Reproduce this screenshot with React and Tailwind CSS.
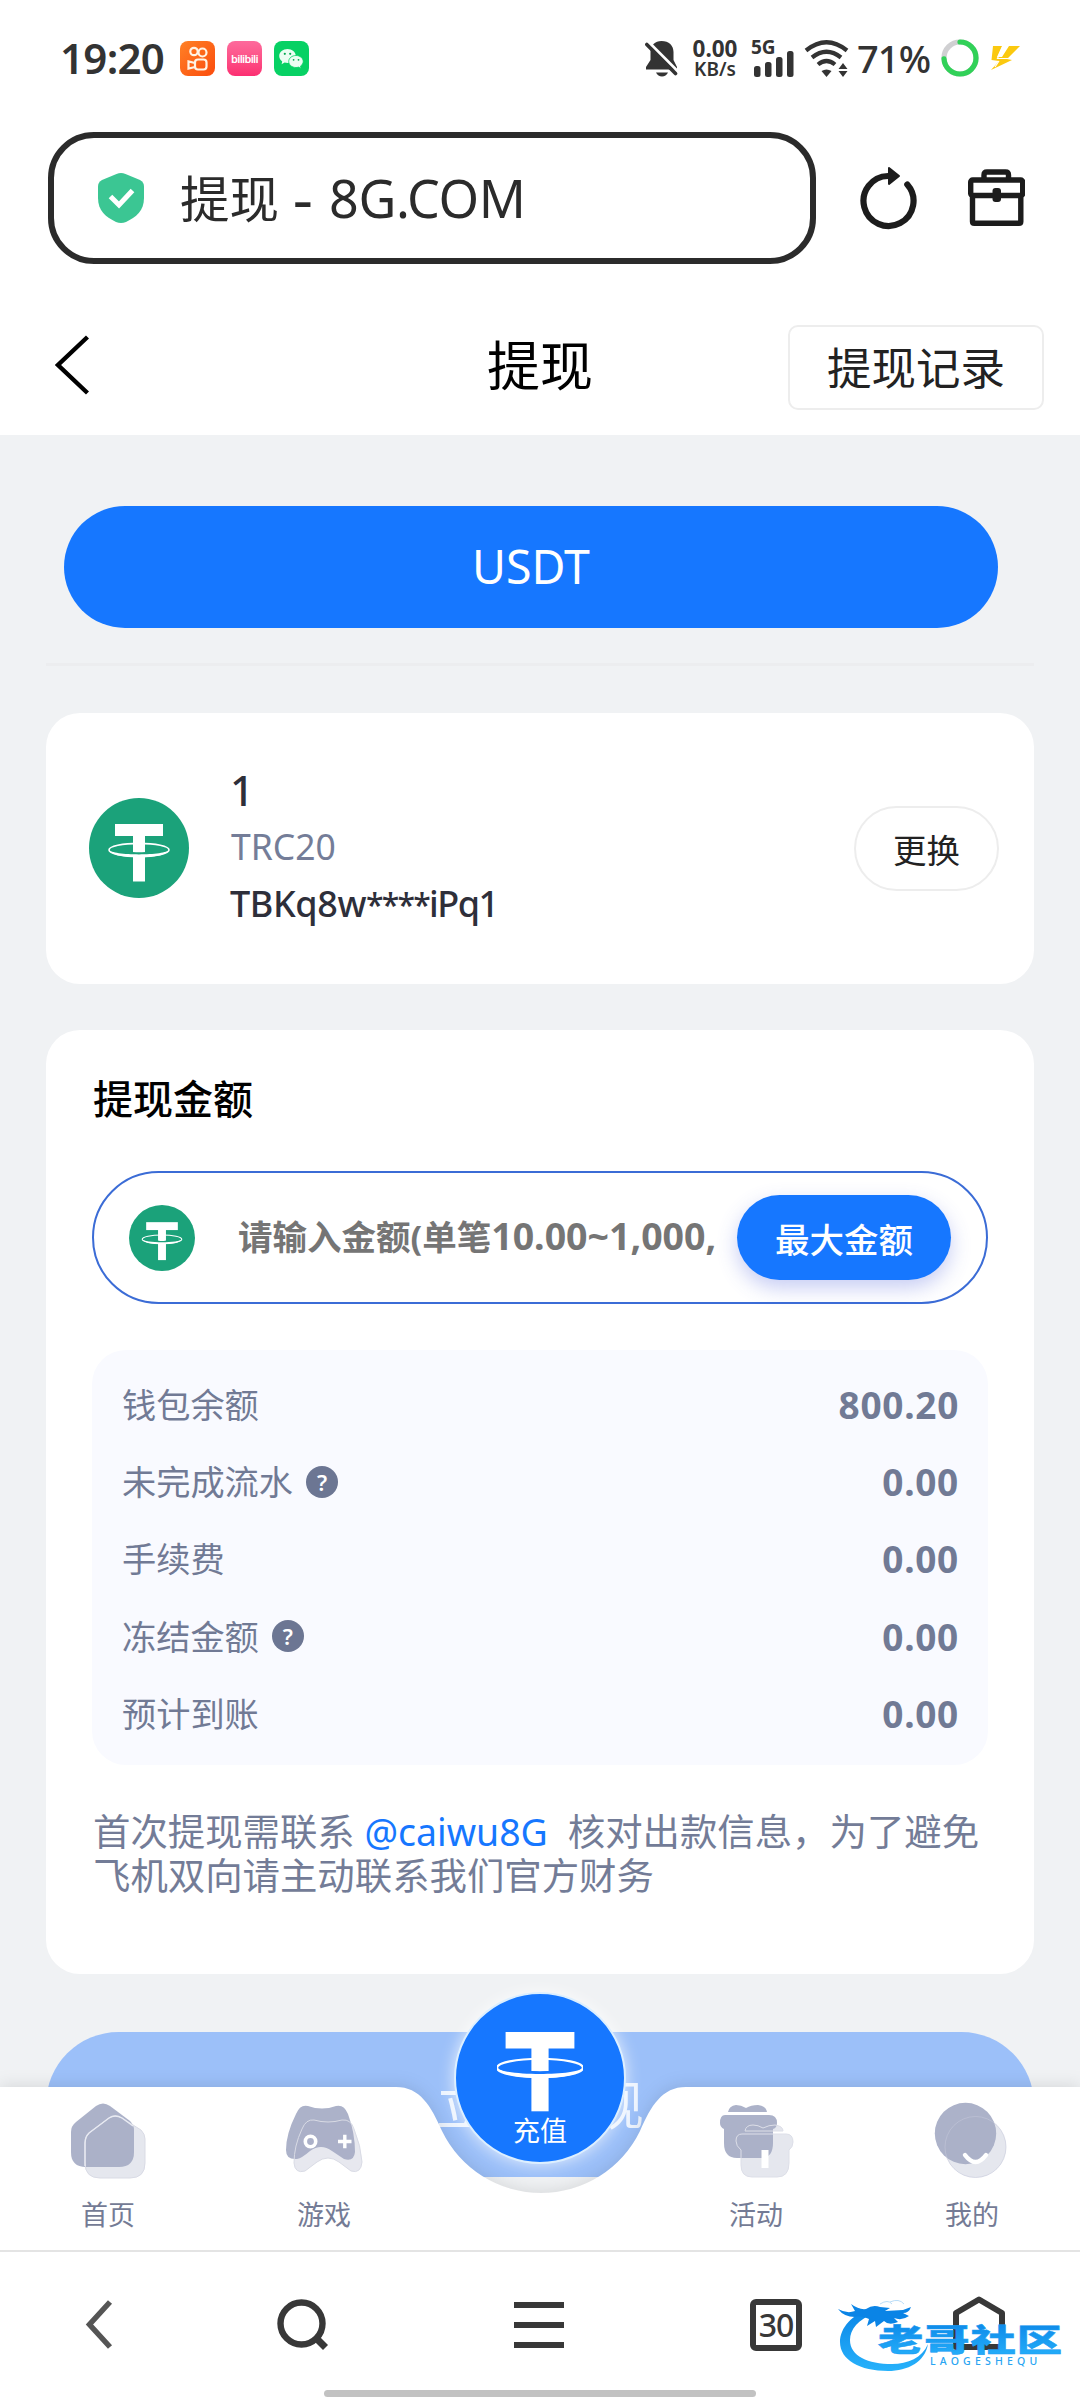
import React from "react";

const saldos = [
  { label: "钱包余额", valor: "800.20" },
  { label: "未完成流水", valor: "0.00", ayuda: true },
  { label: "手续费", valor: "0.00" },
  { label: "冻结金额", valor: "0.00", ayuda: true },
  { label: "预计到账", valor: "0.00" },
];

function TetherMark({ fondo }) {
  return (
    <>
      <path d="M26 26h48v12H26z" fill="#fff" />
      <ellipse cx="50" cy="52" rx="30" ry="6.6" fill="none" stroke="#fff" strokeWidth="1.6" />
      <path d="M20 51.5C21 62 79 62 80 51.5C78 58 22 58 20 51.5z" fill="#fff" />
      <path d="M44 37h12v17.3q-6 .6 -12 0z" fill="#fff" />
      <path d="M44 54.3q6 .6 12 0v1.3q-6 .6 -12 0z" fill={fondo} />
      <path d="M44 58h12v25.500H44z" fill="#fff" />
    </>
  );
}

function TetherIcon({ className }) {
  return (
    <svg viewBox="0 0 100 100" className={className}>
      <circle cx="50" cy="50" r="50" fill="#1ba27a" />
      <TetherMark fondo="#1ba27a" />
    </svg>
  );
}

function StatusBar() {
  return (
    <div className="flex h-[116px] shrink-0 items-center pl-[60px] text-[#333]">
      <span className="w-[120px] text-[42px] leading-none font-semibold tracking-[-0.700px]">19:20</span>
      <div className="flex gap-[12px]">
        <svg viewBox="0 0 35 35" className="size-[35px]">
          <defs>
            <linearGradient id="naranja" x1="0" y1="0" x2="1" y2="1">
              <stop offset="0" stopColor="#ff8126" />
              <stop offset="1" stopColor="#fb4c0d" />
            </linearGradient>
          </defs>
          <rect width="35" height="35" rx="8" fill="url(#naranja)" />
          <g fill="none" stroke="#fff3e4" strokeWidth="2.2">
            <circle cx="14" cy="10.500" r="3.700" />
            <circle cx="22.500" cy="11.500" r="4" />
            <rect x="15" y="18.500" width="11.500" height="10" rx="3" />
            <path d="M15 22l-6.500 -1.500v7l6.500 -1.500" />
          </g>
        </svg>
        <div className="flex size-[35px] items-center justify-center rounded-[8px] bg-linear-to-b from-[#fd6a9c] to-[#fc2e72]">
          <span className="text-[11px] leading-none font-semibold tracking-[-0.700px] text-white">bilibili</span>
        </div>
        <svg viewBox="0 0 35 35" className="size-[35px]">
          <rect width="35" height="35" rx="8" fill="#07d164" />
          <path d="M13.500 8C9 8 5.200 11 5.200 15c0 2.200 1.200 4 3 5.400l-.6 2.800 3-1.600c1 .3 2 .4 3 .4 4.600 0 8.200-3 8.200-7S18 8 13.500 8z" fill="#ecfdf3" />
          <path d="M22 14.500c-4 0-7.300 2.600-7.300 6s3.200 6 7.300 6c.8 0 1.700-.1 2.500-.4l2.600 1.400-.6-2.400c1.700-1.100 2.700-2.800 2.700-4.600 0-3.400-3.200-6-7.200-6z" fill="#ecfdf3" stroke="#07d164" strokeWidth=".8" />
          <g fill="#07a853">
            <circle cx="10.800" cy="12.800" r="1.100" />
            <circle cx="16.200" cy="12.800" r="1.100" />
            <circle cx="19.600" cy="18.800" r=".9" />
            <circle cx="24.500" cy="18.800" r=".9" />
          </g>
        </svg>
      </div>

      <div className="ml-[336px] flex items-center">
        <svg viewBox="0 0 33 37" className="h-[37px] w-[33px]">
          <path d="M16.500 1C10 1 5.500 5.500 5.500 12v8L1 27v2.500h31V27l-3.500-7v-8C28.500 5.500 24 1 16.500 1z" fill="#333" />
          <path d="M11 32.500h12q-2 4 -6 4t-6 -4z" fill="#333" />
          <path d="M2.500 1L34 32.500" stroke="#fff" strokeWidth="3" />
          <path d="M1.800 4.500L30.500 33.500" stroke="#333" strokeWidth="3.600" strokeLinecap="round" />
        </svg>
        <div className="ml-[12px] w-[50px] text-center font-bold">
          <div className="text-[22.500px] leading-[21px]">0.00</div>
          <div className="text-[19px] leading-[20px] font-semibold">KB/s</div>
        </div>
        <svg viewBox="0 0 44 37" className="ml-[11px] h-[37px] w-[44px] overflow-visible">
          <text x="0" y="14" fontSize="19" fontWeight="700" fill="#333">5G</text>
          <g fill="#333">
            <rect x="3" y="26" width="6.500" height="11" rx="2.500" />
            <rect x="14" y="22" width="6.500" height="15" rx="2.500" />
            <rect x="25" y="17" width="6.500" height="20" rx="2.500" />
            <rect x="36" y="11" width="6.500" height="26" rx="2.500" />
          </g>
        </svg>
        <svg viewBox="0 0 46 37" className="ml-[9px] h-[37px] w-[46px]">
          <g fill="none" stroke="#333" strokeWidth="4.200">
            <path d="M2 10.500Q22.500 -6 43 10.500" />
            <path d="M8 17.500Q22.500 6 37 17.500" />
            <path d="M14 24.500Q22.500 17.500 31 24.500" />
          </g>
          <path d="M17.500 31q5 -3 10 0l-5 6z" fill="#333" />
          <path d="M39 23l4.500 6h-9zM39 37l4.500 -6h-9z" fill="#333" />
        </svg>
        <span className="ml-[7px] w-[84px] text-[38px] leading-none font-medium tracking-[-0.900px]">71%</span>
        <svg viewBox="0 0 38 38" className="size-[38px]">
          <circle cx="19" cy="19" r="16" fill="none" stroke="#d0d0d2" strokeWidth="5.200" />
          <circle
            cx="19"
            cy="19"
            r="16"
            fill="none"
            stroke="#31d158"
            strokeWidth="5.200"
            strokeLinecap="round"
            pathLength="100"
            strokeDasharray="74 100"
            transform="rotate(-90 19 19)"
          />
        </svg>
        <svg viewBox="0 0 30 26" className="ml-[11px] h-[26px] w-[30px]">
          <path d="M3 1h9L7 12l5 0L19 1h11L17 14l5 1L1 25l8 -9l-7.500 -1z" fill="#fbc90f" />
          <path d="M13 1L7.500 13.500L18 13.500M9 16L5 22" stroke="#fff" strokeWidth="1.200" fill="none" />
        </svg>
      </div>
    </div>
  );
}

function AddressBar() {
  return (
    <div className="mt-[16px] flex h-[132px] shrink-0 items-center pl-[48px]">
      <div className="flex h-[132px] w-[768px] items-center rounded-[46px] border-[6px] border-[#2b2b2b] pl-[44px]">
        <svg viewBox="0 0 46 50" className="h-[50px] w-[46px]">
          <path d="M18.500 1Q23 -.8 27.500 1L42 7q4 2 4 6.500V25c0 13-8 19-18 24q-5 2 -10 0C8 44 0 38 0 25V13.500Q0 9 4 7z" fill="#3bc693" />
          <path d="M12.500 23.500l8.500 8.500L34.500 17.500" fill="none" stroke="#fff" strokeWidth="5" />
        </svg>
        <div className="ml-[36px] flex items-baseline text-[49.500px] leading-[60px] text-[#2b2b2b]">
          <span>提现</span>
          <span className="ml-[14px] w-[20px] origin-left scale-x-120 text-[51px] font-medium">-</span>
          <span className="ml-[16px] text-[52px] tracking-[-0.300px]">8G.COM</span>
        </div>
      </div>
      <svg viewBox="0 0 60 66" className="-mt-[3px] ml-[42px] h-[66px] w-[60px]">
        <path d="M49.300 20.500A25 25 0 1 1 30 12" fill="none" stroke="#1c1c1c" strokeWidth="6.200" strokeLinecap="round" />
        <path d="M31 4l10 8l-10 8z" fill="#1c1c1c" stroke="#1c1c1c" strokeWidth="2" strokeLinejoin="round" />
      </svg>
      <svg viewBox="0 0 58 58" className="-mt-[3px] ml-[49px] size-[58px]">
        <g fill="none" stroke="#1c1c1c" strokeWidth="5.400">
          <rect x="3.700" y="12" width="52" height="15.500" rx="2" />
          <path d="M5.500 27v26.500q0 1.800 1.800 1.800h44.700q1.800 0 1.800 -1.800V27" />
          <path d="M17 11V7q0 -3 3 -3h18.500q3 0 3 3v4" />
        </g>
        <rect x="25.500" y="20" width="8.500" height="14" rx="3" fill="#1c1c1c" />
      </svg>
    </div>
  );
}

function Header() {
  return (
    <div className="mt-[61px] grid h-[110px] shrink-0 grid-cols-[290px_500px_1fr] items-start">
      <svg viewBox="0 0 34 60" className="mt-[10px] ml-[55px] h-[60px] w-[34px]">
        <path d="M32.500 2L3 30l29.500 28" fill="none" stroke="#000" strokeWidth="4.400" />
      </svg>
      <h1 className="mt-[11px] text-center text-[53px] leading-[60px] text-black">提现</h1>
      <button className="-ml-[2px] h-[85px] w-[256px] rounded-[10px] border-2 border-[#ededed] text-[44.500px] leading-[60px] text-[#222]">
        提现记录
      </button>
    </div>
  );
}

function CuentaCard() {
  return (
    <div className="mt-[47px] flex h-[271px] items-center rounded-[34px] bg-white pr-[35px] pb-[1px] pl-[43px]">
      <TetherIcon className="size-[100px]" />
      <div className="ml-[42px] flex-1 pb-[3px] text-[36px] leading-[57px] text-[#2e2f3a]">
        <div className="-ml-[1px] text-[42px] font-medium">1</div>
        <div className="text-[35.500px] text-[#747d98]">TRC20</div>
        <div className="-ml-[1px] font-medium tracking-[-0.400px]">
          TBKq8w<span className="text-[32px] tracking-[-1.800px]">****</span>
          <span className="tracking-[-1.500px]">iPq1</span>
        </div>
      </div>
      <button className="h-[85px] w-[145px] rounded-full border-2 border-[#ededed] pt-[5px] text-[33.500px] text-[#222]">
        更换
      </button>
    </div>
  );
}

function Tab({ label, children }) {
  return (
    <div className="flex flex-col items-center pt-[13px]">
      <svg viewBox="0 0 80 80" className="size-[80px]">{children}</svg>
      <span className="mt-[17px] text-[27px] leading-[36px] text-[#747b95]">{label}</span>
    </div>
  );
}

function TabBar() {
  return (
    <div className="absolute bottom-0 left-0 h-[163px] w-full">
      {/* Barra con la muesca para el botón central */}
      <svg
        viewBox="0 0 1080 163"
        className="absolute inset-0 h-[163px] w-full overflow-visible drop-shadow-[0_-2px_8px_rgba(0,0,0,0.1)]"
      >
        <path d="M0 0H396C420 0 431 19 442 44A110 110 0 0 0 640 44C651 19 662 0 686 0H1080V163H0z" fill="#fff" />
      </svg>
      <div className="relative grid h-full grid-cols-5">
        <Tab label="首页">
          <path d="M28 6q7 -5 14 0l20 15q4 4 4 9v22q0 15 -15 15H18Q3 67 3 52V32q0 -6 5 -10z" fill="#acb2c9" />
          <path d="M41 18q6 -4 13 0l19 12q4 4 4 9v24q0 15 -15 15H32Q17 78 17 63V43q0 -6 4 -10z" fill="#a9aec6" fillOpacity=".3" stroke="#d9dbe5" strokeWidth="1" />
          <path d="M17 66V43q0 -6 4 -10L41 18q6 -4 13 0l11 8" fill="none" stroke="#e8eaf2" strokeWidth="1.400" />
        </Tab>
        <Tab label="游戏">
          <path d="M12 14q4 -10 12 -8q14 5 28 0q8 -2 12 8q7 19 7 38q-1 10 -11 7l-12 -8q-11 -8 -22 0q-8 7 -13 8Q2 60 2 50Q2 34 12 14z" fill="#acb2c9" />
          <path d="M18 29q4 -10 12 -9q14 4 28 0q9 -1 12 9q7 17 8 33q-1 12 -11 9L55 62q-11 -8 -22 0l-12 9Q11 74 10 63q0 -17 8 -34z" fill="#a9aec6" fillOpacity=".28" stroke="#d9dbe5" strokeWidth="1" />
          <circle cx="26.500" cy="41.500" r="5.200" fill="none" stroke="#fff" strokeWidth="3.600" />
          <path d="M54 41.500h13.500M60.800 34.800v13.500" stroke="#fff" strokeWidth="3.400" />
        </Tab>
        <div />
        <Tab label="活动">
          <path d="M12 12q1 -6 8 -7q5 0 10 3q5 -3 12 -3q8 1 9 7z" fill="#acb2c9" />
          <path d="M9 15h44q8 0 8 8q0 5 -4 6v14q0 15 -12 15H21Q8 58 8 43V29q-4 -2 -4 -6q0 -8 5 -8z" fill="#acb2c9" />
          <path d="M29 31q1 -6 8 -6q5 0 10 3q6 -3 12 -3q8 1 8 6zM26 34h44q7 0 7 8q0 5 -4 8v13q0 14 -12 14H36Q25 77 25 65V50q-5 -4 -5 -9q0 -7 6 -7z" fill="#a9aec6" fillOpacity=".3" stroke="#dddfe8" strokeWidth="1" />
          <path d="M45.500 50h7v18h-7z" fill="#fff" />
        </Tab>
        <Tab label="我的">
          <circle cx="33.500" cy="33.500" r="30.700" fill="#acb2c9" />
          <circle cx="43.500" cy="47" r="30.500" fill="#a9aec6" fillOpacity=".3" stroke="#c3c7d8" strokeOpacity=".6" strokeWidth="1" />
          <path d="M33 55q10.500 14 21 0" fill="none" stroke="#fff" strokeWidth="4.400" strokeLinecap="round" />
        </Tab>
      </div>
      <div className="absolute -top-[95px] left-[454px] flex size-[172px] flex-col items-center rounded-full border-2 border-[#dcefff] bg-[#1677ff] shadow-[0_0_16px_rgba(255,255,255,0.75)]">
        <svg viewBox="20 26 60 58" className="mt-[38px] h-[80px] w-[86px]" preserveAspectRatio="none">
          <TetherMark fondo="#1677ff" />
        </svg>
        <span className="mt-[2px] text-[27px] leading-[34px] text-white">充值</span>
      </div>
    </div>
  );
}

function Watermark() {
  return (
    <svg viewBox="0 0 240 84" className="absolute top-[44px] left-[832px] h-[84px] w-[240px]">
      <defs>
        <linearGradient id="azul" x1="0" y1="0" x2="0" y2="1">
          <stop offset="0" stopColor="#0a84e6" />
          <stop offset="1" stopColor="#27b2fb" />
        </linearGradient>
      </defs>
      <path d="M40 12C20 18 8 32 8 46c0 18 20 29 48 29c20 0 37 -9 40 -27c-6 14 -20 20 -36 20c-24 0 -42 -8 -42 -24c0 -11 8 -20 24 -27z" fill="url(#azul)" />
      <path d="M6 13q9 5 17 2l-4 -7q8 6 15 5q7 -5 14 -2l10 1l-5 3l18 -1l8 -3q-2 6 -8 6l6 3q-7 5 -15 2l4 4q-9 4 -14 -1l-8 6l-1 -6l-8 5l2 -7q-10 -4 -14 -2Q12 21 6 13z" fill="#0a84e6" />
      <path d="M48 8q8 -5 12 0M58 6q9 -4 14 2" fill="none" stroke="#b9ddf8" strokeWidth="1" />
      <text
        transform="translate(46 55) scale(1.46 1)"
        fontSize="31"
        fontWeight="900"
        letterSpacing=".7"
        fill="url(#azul)"
        stroke="#1c9bf2"
        strokeWidth=".5"
      >
        老哥社区
      </text>
      <text x="98" y="68.500" fontSize="10.500" fontWeight="500" letterSpacing="4.200" fill="#2aa5f2">
        LAOGESHEQU
      </text>
    </svg>
  );
}

function BrowserNav() {
  return (
    <div className="relative flex h-[150px] shrink-0 flex-col border-t-2 border-[#e4e4e4] bg-white">
      <div className="grid h-[138px] grid-cols-5 items-start pt-[40px]">
        <svg viewBox="0 0 60 66" className="ml-[69px] h-[66px] w-[60px]">
          <path d="M41 10L20.500 32.500L41 55" fill="none" stroke="#555" strokeWidth="5.500" />
        </svg>
        <svg viewBox="0 0 60 66" className="ml-[56px] h-[66px] w-[60px]">
          <circle cx="29.500" cy="31.500" r="21" fill="none" stroke="#383838" strokeWidth="6.400" />
          <path d="M44 46l9.500 9.500" stroke="#383838" strokeWidth="7" />
        </svg>
        <svg viewBox="0 0 60 66" className="ml-[77px] h-[66px] w-[60px]">
          <path d="M5 13h50M5 33h50M5 53h50" stroke="#383838" strokeWidth="6" />
        </svg>
        <div className="mt-[7px] ml-[102px] flex size-[52px] items-center justify-center rounded-[6px] border-[6px] border-[#383838] text-[32px] leading-none font-medium tracking-[-1px] text-[#383838]">
          30
        </div>
        <svg viewBox="0 0 60 66" className="ml-[85px] h-[66px] w-[60px]">
          <path d="M7 55V21L30 7.500l23 13.500V55z" fill="none" stroke="#383838" strokeWidth="6" strokeLinejoin="round" />
        </svg>
      </div>
      <div className="ml-[324px] h-[7px] w-[432px] rounded-full bg-[#c2c2c2]" />
      <Watermark />
    </div>
  );
}

export default function App() {
  return (
    <div className="flex h-[2400px] w-[1080px] flex-col overflow-hidden bg-white font-['Noto_Sans','Noto_Sans_CJK_SC',sans-serif]">
      <StatusBar />
      <AddressBar />
      <Header />

      <main className="relative flex-1 overflow-hidden bg-[#f0f2f4] px-[46px] pt-[71px]">
        <button className="ml-[18px] block h-[122px] w-[934px] rounded-full bg-[#1677ff] pb-[2px] text-[46.500px] leading-[60px] text-white">
          USDT
        </button>
        <div className="mt-[35px] h-[3px] bg-[#ecedef]" />

        <CuentaCard />

        {/* Monto a retirar */}
        <div className="mt-[46px] h-[944px] rounded-[34px] bg-white px-[46px] pt-[44px]">
          <h2 className="pl-[1px] text-[40px] leading-[50px] font-medium text-black">提现金额</h2>
          <div className="mt-[47px] flex h-[133px] items-center rounded-full border-2 border-[#3b6cd6] pl-[35px]">
            <TetherIcon className="size-[66px] shrink-0" />
            <div className="ml-[43px] flex w-[483px] items-baseline pb-[3px] text-[34.500px] font-bold whitespace-nowrap text-[#757575]">
              <span>请输入金额(单笔</span>
              <span className="text-[37.500px]">10.00~1,000,</span>
            </div>
            <button className="ml-[16px] h-[85px] w-[214px] rounded-full bg-[#1677ff] pt-[5px] text-[34.500px] font-medium text-white shadow-[0_8px_20px_rgba(70,90,220,0.3)]">
              最大金额
            </button>
          </div>

          <div className="mt-[46px] h-[415px] rounded-[34px] bg-[#f9faff] px-[30px] pt-[16px] text-[#717a95]">
            {saldos.map((item) => (
              <div key={item.label} className="flex h-[77.250px] items-center">
                <span className="text-[34.200px]">{item.label}</span>
                {item.ayuda && (
                  <span className="ml-[13px] flex size-[32px] items-center justify-center rounded-full bg-[#6c7693] text-[22px] leading-none font-semibold text-white">
                    ?
                  </span>
                )}
                <span className="-mr-[1px] ml-auto text-[37px] font-bold tracking-[0.700px]">{item.valor}</span>
              </div>
            ))}
          </div>

          <p className="mt-[45px] pl-[1px] text-[37.400px] leading-[44px] whitespace-nowrap text-[#737c97]">
            首次提现需联系 <span className="text-[#1677ff]">@caiwu8G</span>
            <span className="ml-[20px]">核对出款信息，为了避免</span>
            <br />
            飞机双向请主动联系我们官方财务
          </p>
        </div>

        <button className="mt-[58px] block h-[145px] w-full rounded-full bg-[#9cc0f9] text-[52px] leading-[60px] text-[#edf4fe]">
          立即提现
        </button>

        <TabBar />
      </main>

      <BrowserNav />
    </div>
  );
}
